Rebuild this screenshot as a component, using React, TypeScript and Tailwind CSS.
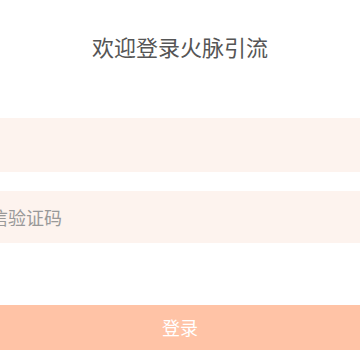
export default function App() {
  return (
    <div
      className="w-[360px] h-[360px] bg-white overflow-hidden flex flex-col"
      style={{ fontFamily: '"Noto Sans CJK SC", "Noto Sans", sans-serif' }}
    >
      <h1 className="mt-[31px] h-[30px] text-center text-[22px] leading-[30px] font-normal text-[#555]">
        欢迎登录火脉引流
      </h1>
      <div className="mt-[57px] flex flex-col gap-[19px]">
        <input
          className="h-[54px] w-full bg-[#fdf3ee] outline-none text-[18px] text-[#333]"
          placeholder=""
        />
        <input
          className="h-[52px] w-full bg-[#fdf3ee] outline-none text-[18px] text-[#333] indent-[-82px] placeholder:text-[#999]"
          placeholder="请输入短信验证码"
        />
      </div>
      <button className="mt-[62px] h-[45px] w-full bg-[#ffc3a6] text-white text-[18px] leading-[45px]">
        登录
      </button>
    </div>
  )
}
